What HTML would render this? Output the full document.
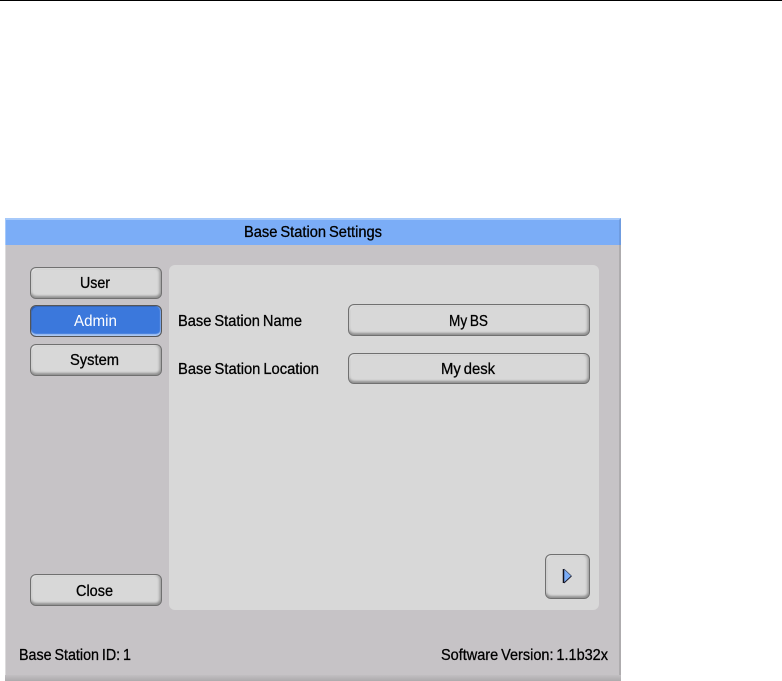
<!DOCTYPE html>
<html>
<head>
<meta charset="utf-8">
<style>
html,body{margin:0;padding:0;background:#fff;width:782px;height:681px;overflow:hidden}
.a{position:absolute;box-sizing:border-box}
#line{left:0;top:0;width:782px;height:1px;background:#000}
#panel{left:5px;top:218px;width:616px;height:463px;background:#c6c3c6;border-left:1px solid #dcdbdc;border-right:2px solid #aeacae}
#bottom{left:5px;top:675px;width:616px;height:6px;background:linear-gradient(#c2bfc2,#acaaac)}
#title{left:5px;top:218px;width:616px;height:27px;background:#7badf7;border-top:2px solid #a6c9fa;border-left:1px solid #a6c9fa;border-right:2px solid #6f9ce0}
#inner{left:169px;top:265px;width:430px;height:345px;background:#d8d8d8;border-radius:6px}
.b{background:#d8d8d8;border:1px solid #707070;border-radius:6px;box-shadow:inset 0 -2px 2px #8f8f8f,inset -2px 0 2px #b0b0b0,inset 1px 1px 0 #ececec}
.s{background:#3b78dc;box-shadow:inset 0 -2px 1px #a9c6f2,inset -1px 0 1px #7ba4e6,inset 1px 1px 0 #2a5cb0;border-color:#555}
svg{position:absolute;left:0;top:0}
text{font-family:"Liberation Sans",sans-serif;font-size:16px;fill:#000;stroke:#000;stroke-width:.3px;word-spacing:-1.2px}
text.w{fill:#fff;stroke:none}
</style>
</head>
<body>
<div class="a" id="line"></div>
<div class="a" id="panel"></div>
<div class="a" id="bottom"></div>
<div class="a" id="title"></div>
<div class="a" id="inner"></div>
<div class="a b" style="left:30px;top:267px;width:132px;height:32px"></div>
<div class="a b s" style="left:30px;top:305px;width:132px;height:32px"></div>
<div class="a b" style="left:30px;top:344px;width:132px;height:32px"></div>
<div class="a b" style="left:30px;top:574px;width:132px;height:32px"></div>
<div class="a b" style="left:348px;top:304px;width:242px;height:32px"></div>
<div class="a b" style="left:348px;top:353px;width:242px;height:31px"></div>
<div class="a b" style="left:545px;top:554px;width:45px;height:45px"></div>
<svg width="782" height="681" viewBox="0 0 782 681">
<text x="244" y="237" textLength="138" lengthAdjust="spacingAndGlyphs">Base Station Settings</text>
<text x="80" y="288" textLength="30" lengthAdjust="spacingAndGlyphs">User</text>
<text class="w" x="74" y="326" textLength="43" lengthAdjust="spacingAndGlyphs">Admin</text>
<text x="70" y="365" textLength="49" lengthAdjust="spacingAndGlyphs">System</text>
<text x="76" y="596" textLength="37" lengthAdjust="spacingAndGlyphs">Close</text>
<text x="178" y="326" textLength="124" lengthAdjust="spacingAndGlyphs">Base Station Name</text>
<text x="178" y="374" textLength="141" lengthAdjust="spacingAndGlyphs">Base Station Location</text>
<text x="449" y="326" textLength="39" lengthAdjust="spacingAndGlyphs">My BS</text>
<text x="441" y="374" textLength="54" lengthAdjust="spacingAndGlyphs">My desk</text>
<text x="19" y="660" textLength="112" lengthAdjust="spacingAndGlyphs">Base Station ID: 1</text>
<text x="441" y="660" textLength="167" lengthAdjust="spacingAndGlyphs">Software Version: 1.1b32x</text>
<path d="M564 569.5 L564 582.5 L571 576 Z" fill="#7badf7" stroke="none"/>
<path d="M563.5 569 L563.5 583" fill="none" stroke="#10101c" stroke-width="1.5"/>
<path d="M564 583 L571.5 576" fill="none" stroke="#1a1a2a" stroke-width="1"/>
<path d="M564 569 L571.5 576" fill="none" stroke="#33415c" stroke-width=".7"/>
</svg>
</body>
</html>
